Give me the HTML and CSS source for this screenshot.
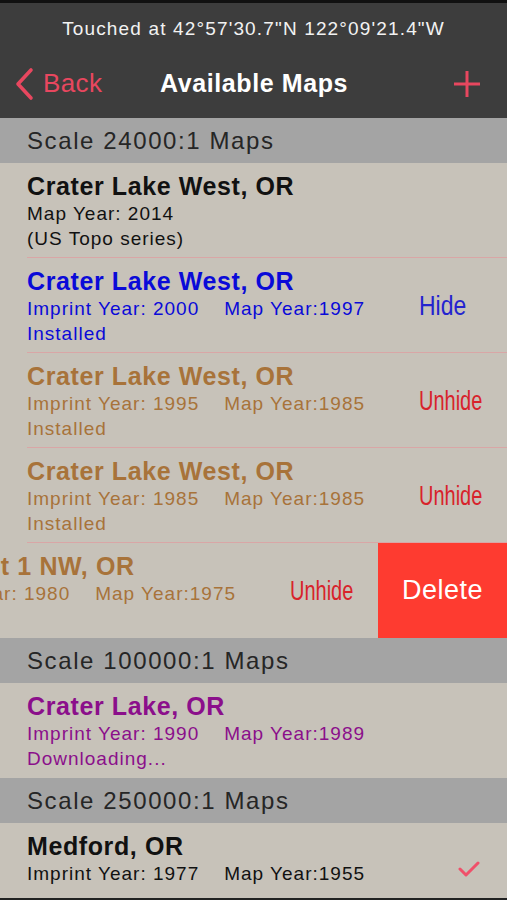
FILE: index.html
```html
<!DOCTYPE html>
<html>
<head>
<meta charset="utf-8">
<link rel="stylesheet" href="styles.css">
</head>
<body>
<div class="screen">
  <div class="topbar">
    <div class="status">Touched at 42°57'30.7"N 122°09'21.4"W</div>
    <div class="nav">
      <div class="back">
        <svg class="chev" width="22" height="34" viewBox="0 0 22 34"><path d="M18 3 L5 17 L18 31" fill="none" stroke="#e8475f" stroke-width="3.6" stroke-linecap="round" stroke-linejoin="round"/></svg>
        <span>Back</span>
      </div>
      <div class="title">Available Maps</div>
      <div class="right">
        <svg class="plus" width="28" height="28" viewBox="0 0 28 28"><path d="M14 1 V27 M1 14 H27" stroke="#e8475f" stroke-width="3" fill="none"/></svg>
      </div>
    </div>
  </div>

  <div class="section">Scale 24000:1 Maps</div>
  <div class="row sep">
    <div class="content black">
      <div class="name">Crater Lake West, OR</div>
      <div class="sub">Map Year: 2014</div>
      <div class="sub">(US Topo series)</div>
    </div>
  </div>
  <div class="row sep">
    <div class="content blue">
      <div class="name">Crater Lake West, OR</div>
      <div class="sub"><span class="imp">Imprint Year: 2000</span><span>Map Year:1997</span></div>
      <div class="sub">Installed</div>
      <div class="act hide">Hide</div>
    </div>
  </div>
  <div class="row sep">
    <div class="content brown">
      <div class="name">Crater Lake West, OR</div>
      <div class="sub"><span class="imp">Imprint Year: 1995</span><span>Map Year:1985</span></div>
      <div class="sub">Installed</div>
      <div class="act unhide">Unhide</div>
    </div>
  </div>
  <div class="row sep">
    <div class="content brown">
      <div class="name">Crater Lake West, OR</div>
      <div class="sub"><span class="imp">Imprint Year: 1985</span><span>Map Year:1985</span></div>
      <div class="sub">Installed</div>
      <div class="act unhide">Unhide</div>
    </div>
  </div>
  <div class="row swiped">
    <div class="content brown">
      <div class="name">Prospect 1 NW, OR</div>
      <div class="sub"><span class="imp">Imprint Year: 1980</span><span>Map Year:1975</span></div>
      <div class="act unhide">Unhide</div>
    </div>
    <div class="delete">Delete</div>
  </div>

  <div class="section">Scale 100000:1 Maps</div>
  <div class="row">
    <div class="content purple">
      <div class="name">Crater Lake, OR</div>
      <div class="sub"><span class="imp">Imprint Year: 1990</span><span>Map Year:1989</span></div>
      <div class="sub">Downloading...</div>
    </div>
  </div>

  <div class="section">Scale 250000:1 Maps</div>
  <div class="row last">
    <div class="content black">
      <div class="name">Medford, OR</div>
      <div class="sub"><span class="imp">Imprint Year: 1977</span><span>Map Year:1955</span></div>
      <svg class="check" width="22" height="18" viewBox="0 0 22 18"><path d="M2 9 L8 15 L20 3" fill="none" stroke="#f0506a" stroke-width="3" stroke-linecap="round" stroke-linejoin="round"/></svg>
    </div>
  </div>
  <div class="bottom"></div>
</div>
</body>
</html>
```

FILE: styles.css
```css
* { box-sizing: border-box; }
html, body { margin: 0; padding: 0; }
body {
  width: 507px;
  height: 900px;
  overflow: hidden;
  background: #c7c2b9;
  font-family: "Liberation Sans", Arial, sans-serif;
}
.screen {
  width: 507px;
  height: 900px;
  display: flex;
  flex-direction: column;
  background: #c7c2b9;
  overflow: hidden;
}
.topbar {
  height: 118px;
  background: #3d3d3d;
  border-top: 3px solid #111;
  display: flex;
  flex-direction: column;
}
.status {
  height: 50px;
  padding-top: 14px;
  text-align: center;
  color: #f2f2f2;
  font-size: 19px;
  letter-spacing: 1.15px;
  line-height: 24px;
}
.nav {
  flex: 1;
  display: grid;
  grid-template-columns: 1fr auto 1fr;
  align-items: center;
  padding: 0 26px 4px 13px;
}
.back {
  display: flex;
  align-items: center;
  gap: 8px;
  color: #e8475f;
  font-size: 26px;
  letter-spacing: 0.4px;
}
.chev { display: block; }
.title {
  color: #ffffff;
  font-size: 25px;
  letter-spacing: 0.6px;
  font-weight: bold;
  margin-left: 14px;
}
.right { display: flex; justify-content: flex-end; }
.plus { display: block; }
.section {
  height: 45px;
  flex: none;
  background: #a4a4a4;
  color: #262626;
  font-size: 24px;
  letter-spacing: 1.6px;
  line-height: 45px;
  padding-left: 27px;
}
.row {
  height: 95px;
  flex: none;
  display: flex;
  overflow: hidden;
}
.row.sep .content {
  border-bottom: 1px solid #d9a6a6;
}
.row.last { height: 75px; }
.content {
  flex: none;
  width: 480px;
  margin-left: 27px;
  padding-top: 9px;
  position: relative;
}
.swiped .content {
  margin-left: -102px;
}
.name {
  font-size: 25px;
  letter-spacing: 0.6px;
  font-weight: bold;
  line-height: 29px;
}
.sub {
  font-size: 19px;
  letter-spacing: 1px;
  line-height: 25px;
}
.imp { margin-right: 25px; }
.act {
  position: absolute;
  left: 392px;
  top: 32px;
  font-size: 27px;
  line-height: 32px;
  transform: scaleX(0.74);
  transform-origin: left center;
}
.hide { color: #2424cf; transform: scaleX(0.85); }
.unhide { color: #d8232b; }
.black { color: #111111; }
.blue { color: #0a0ad8; }
.brown { color: #a8733a; }
.purple { color: #8b0f8b; }
.delete {
  flex: none;
  width: 129px;
  margin-left: auto;
  background: #fe3b30;
  color: #ffffff;
  font-size: 27px;
  letter-spacing: 0.5px;
  display: flex;
  align-items: center;
  justify-content: center;
}
.check {
  position: absolute;
  left: 431px;
  top: 37px;
}
.bottom {
  flex: 1;
  background: #222;
}
```
